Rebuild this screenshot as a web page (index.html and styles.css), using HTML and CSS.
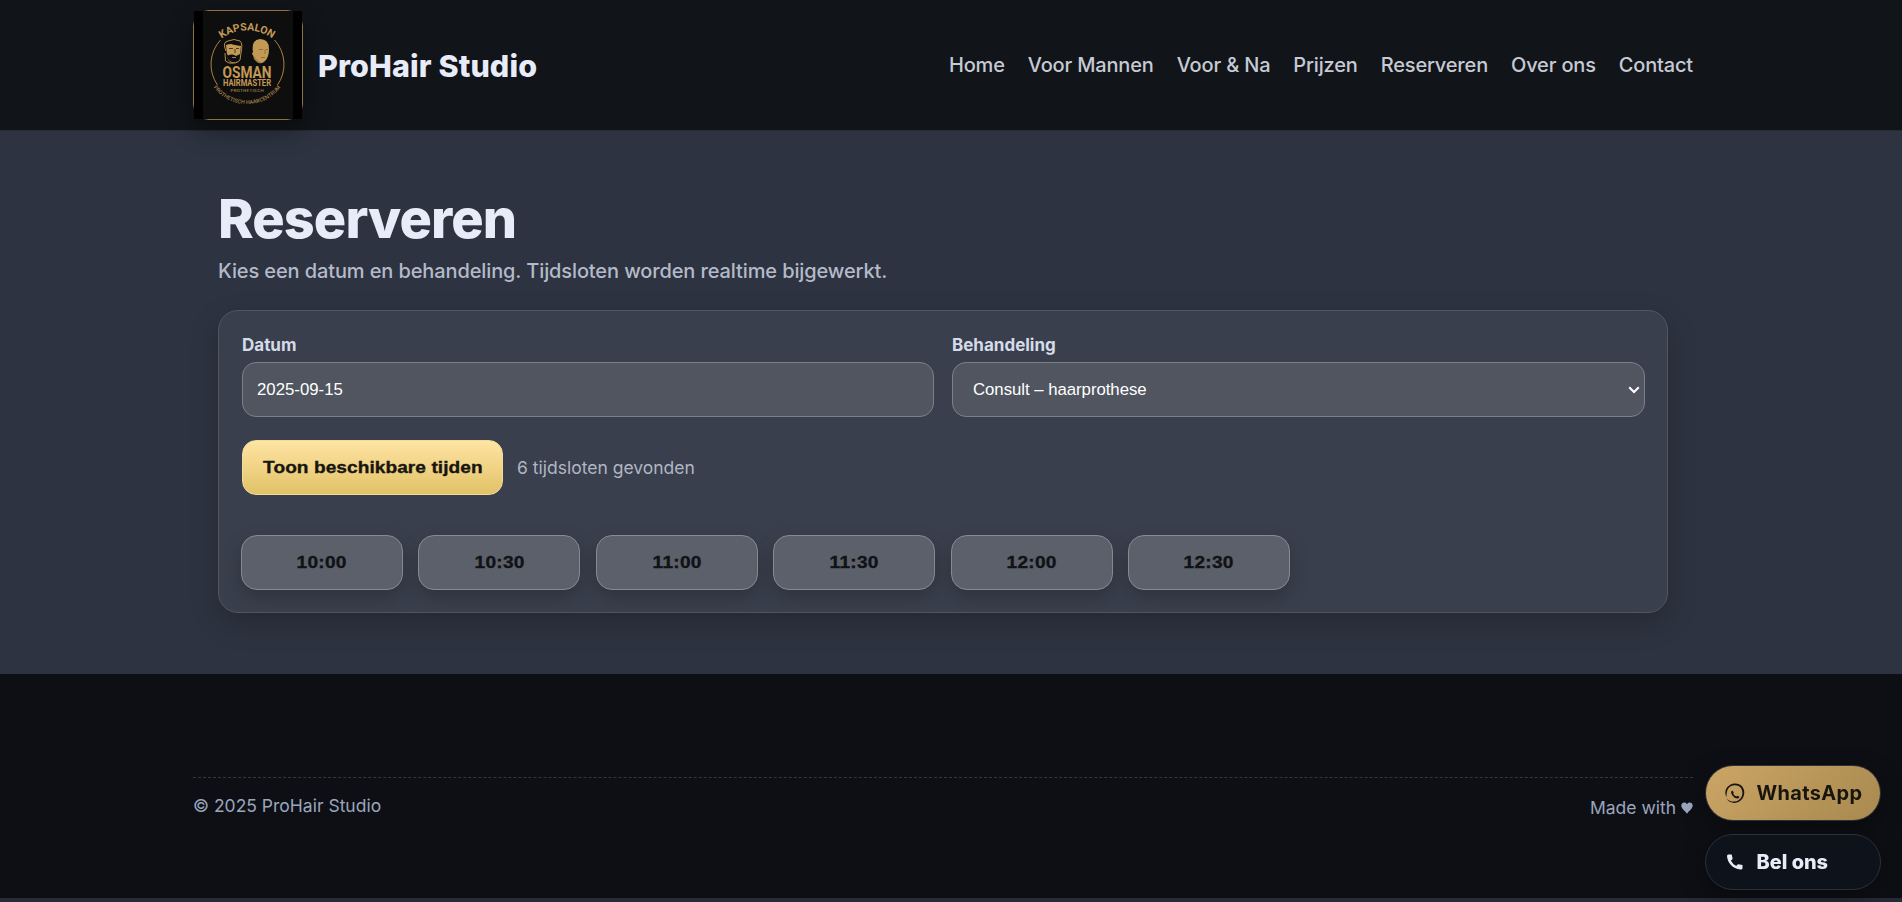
FILE: index.html
```html
<!DOCTYPE html>
<html lang="nl">
<head>
<meta charset="utf-8">
<title>ProHair Studio – Reserveren</title>
<link rel="stylesheet" href="styles.css">
</head>
<body>
<header class="site-header">
  <div class="container header-row">
    <a class="brand">
      <span class="logo">
        <svg viewBox="0 0 108 108" width="108" height="108" aria-label="Kapsalon Osman Hairmaster">
          <defs>
            <path id="arc-top" d="M23 31.500 A43 43 0 0 1 83 31.500"/>
            <path id="arc-bottom" d="M18.500 75 A42 42 0 0 0 87.500 75"/>
          </defs>
          <rect width="108" height="108" fill="#000"/>
          <rect x="9" width="90" height="108" fill="#0e0e0f"/>
          <g fill="none" stroke="#a78143" stroke-width="1">
            <path d="M26.500 29 A36 36 0 0 0 23.500 74"/>
            <path d="M80.500 29 A36 36 0 0 1 83.500 74"/>
          </g>
          <g fill="#c39a55" class="logo-text">
            <text font-size="10.500" text-anchor="middle"><textPath href="#arc-top" startOffset="50%">KAPSALON</textPath></text>
            <text x="53" y="67" font-size="16.500" text-anchor="middle" textLength="49" lengthAdjust="spacingAndGlyphs">OSMAN</text>
            <text x="53" y="75" font-size="8.200" text-anchor="middle" textLength="48" lengthAdjust="spacingAndGlyphs">HAIRMASTER</text>
            <text x="53" y="80.700" font-size="4.400" text-anchor="middle" textLength="33" class="logo-dim">PROTHETISCH</text>
            <text font-size="5.400" text-anchor="middle" class="logo-dim"><textPath href="#arc-bottom" startOffset="50%">PROTHETISCH HAARCENTRUM</textPath></text>
          </g>
          <path fill="#c39a55" d="M32 34 L33 44 Q34 52 39 52 Q46 51 46 44 L47 35 Q40 34 37 33 Q35 33 32 34Z"/>
          <path fill="#0e0e0f" d="M32 41 L34 44.500 Q38 42.500 42 45 L46 43 L46 48 Q43 52 38 51 Q33 50 32 41Z"/>
          <path fill="none" stroke="#c39a55" stroke-width=".9" d="M32 40 Q28 31 34 30 Q40 27 46 30 Q49 32 47 42 L46 49 Q43 53 35 52 L31.500 50 L31 42"/>
          <path fill="none" stroke="#0e0e0f" stroke-width=".7" d="M35 37.500h4M42 37.500h3M41 38v4"/>
          <path fill="none" stroke="#c39a55" stroke-width=".8" d="M38 46.500h4"/>
          <path fill="#c39a55" d="M59 41 Q57 29 66 28 Q75 28 75 38 Q75 46 71 50 Q67 54 63 51 Q59 48 59.500 45 Q57 43 59 41Z"/>
          <path fill="none" stroke="#6b5129" stroke-width=".6" d="M65 38.500h4M71.500 38.500h2.500M71 39v4M67 46.500h4M60 46Q63 51 67 52"/>
        </svg>
      </span>
      <span class="brand-name">ProHair Studio</span>
    </a>
    <nav class="nav">
      <a>Home</a><a>Voor Mannen</a><a>Voor &amp; Na</a><a>Prijzen</a><a>Reserveren</a><a>Over ons</a><a>Contact</a>
    </nav>
  </div>
</header>

<main class="booking">
  <h1>Reserveren</h1>
  <p class="lead">Kies een datum en behandeling. Tijdsloten worden realtime bijgewerkt.</p>
  <section class="card">
    <div class="fields">
      <label class="field"><span>Datum</span><input type="text" value="2025-09-15"></label>
      <label class="field"><span>Behandeling</span>
        <div class="select-wrap">
          <select><option>Consult – haarprothese</option></select>
          <svg class="chevron" viewBox="0 0 12 8" width="12" height="8"><path d="M1.200 1.200 6 6 10.800 1.200" fill="none" stroke="#fff" stroke-width="2"/></svg>
        </div>
      </label>
    </div>
    <div class="actions">
      <button class="btn-gold"><span>Toon beschikbare tijden</span></button>
      <span class="status">6 tijdsloten gevonden</span>
    </div>
    <div class="slots">
      <button><span>10:00</span></button><button><span>10:30</span></button><button><span>11:00</span></button><button><span>11:30</span></button><button><span>12:00</span></button><button><span>12:30</span></button>
    </div>
  </section>
</main>

<footer class="site-footer">
  <div class="container footer-row">
    <span>© 2025 ProHair Studio</span>
    <span class="made">Made with <svg class="heart" viewBox="0 0 12 12" width="12" height="12"><path fill="currentColor" d="M6 11.800C5 9.800.3 7 .3 3.600.3.200 4.700-.6 6 2.300 7.300-.6 11.700.2 11.700 3.600 11.700 7 7 9.800 6 11.800Z"/></svg></span>
  </div>
</footer>

<div class="floating">
  <a class="pill pill-gold">
    <svg viewBox="0 0 20 20" width="20" height="20"><path fill="currentColor" fill-rule="evenodd" d="M9.800.5C15.500.200 19.400 4.300 19.300 9.600 19.200 15.500 15 20 9.500 19.900 6 19.800 3 18.300 1.300 15.200 3.600 17.800 6.400 18.800 9.600 18.500 14.300 18.200 17.400 14.300 17.400 9.700 17.300 5 14.200 2.200 9.800 2.300 6.800 2.400 4.200 3.800 2.800 6.200 1.300 9 1.700 12.600 1.300 14 -.4 10.500.2 6.800 2.400 4.100 4.200 1.900 6.900.700 9.800.500Z"/><path fill="currentColor" d="M6.300 8.200Q7.500 7 8.200 8.600L8.700 9.800 8.200 10.700Q9.400 12.700 11.400 13.500L12.400 12.700 14.400 13.700Q14.300 15.300 12.500 15.400 9.200 15.300 7.200 12.200 5.500 9.500 6.300 8.200Z"/></svg>
    WhatsApp
  </a>
  <a class="pill pill-dark">
    <svg viewBox="0 0 20 20" width="20" height="20"><path fill="currentColor" d="M3.200 2.500H6.700L7.600 6.500Q7.500 8 5.800 8.500 7.500 12 11.300 14 12 12.300 13.300 12.200L17.500 13.100V16.600Q17 17.800 15.500 17.500 9.500 17 5.700 12.700 2.300 9 2 4 2 2.500 3.200 2.500Z"/></svg>
    Bel ons
  </a>
</div>
</body>
</html>
```
FILE: styles.css
```css
* { box-sizing: border-box; }
body {
  margin: 0;
  min-height: 902px;
  font-family: Inter, "Liberation Sans", sans-serif;
  font-size: 18px;
  color: #e8ecf8;
  background: #262b38;
  overflow: hidden;
}
.container { width: 1500px; margin-left: 193px; }

.site-header { height: 131px; background: #111418; border-bottom: 1px solid #262b30; }
.header-row { height: 130px; display: flex; align-items: center; justify-content: space-between; }
.brand { display: flex; align-items: center; gap: 15px; }
.logo {
  width: 110px; height: 110px;
  border: 1px solid #8c7346; border-radius: 16px;
  box-shadow: 0 10px 26px rgba(0, 0, 0, .4);
}
.logo svg { display: block; }
.logo-text { font-family: Roboto, sans-serif; font-weight: 700; }
.logo-dim { fill: #a17f48; font-weight: 500; }
.brand-name { font-size: 30.500px; font-weight: 800; letter-spacing: .1px; white-space: nowrap; }
.nav { display: flex; gap: 23px; font-size: 20px; font-weight: 500; letter-spacing: -.17px; color: #c6cad4; }
.nav a { white-space: nowrap; }

.booking { height: 543px; padding: 58px 234px 0 218px; background: #2d3340; }
h1 { margin: 0; font-size: 54px; line-height: 60px; font-weight: 800; letter-spacing: -.9px; }
.lead { margin: 6px 0 0; font-size: 20px; line-height: 32px; font-weight: 500; letter-spacing: -.115px; color: #b4bac9; }
.card {
  margin-top: 23px; height: 303px; padding: 21px 22px 21px 23px;
  background: #393f4c; border: 1px solid #505664; border-radius: 20px;
  box-shadow: 0 10px 30px rgba(0, 0, 0, .2);
}
.fields { display: grid; grid-template-columns: 692px 693px; gap: 18px; }
.field { display: flex; flex-direction: column; font-size: 17px; font-weight: 700; color: #d6dbe8; }
.field > span { line-height: 26px; margin-bottom: 4px; }
input, select {
  display: block; appearance: none;
  height: 55px; width: 100%; padding: 0 14px;
  font: 400 16.800px "Liberation Sans", sans-serif; color: #fff;
  background: #50555f; border: 1px solid #7b808a; border-radius: 14px;
}
select { padding: 0 0 0 20px; letter-spacing: -.04px; }
.select-wrap { position: relative; }
.chevron { position: absolute; right: 5px; top: 24px; }
.actions { display: flex; align-items: center; gap: 14px; margin-top: 23px; }
.btn-gold, .slots button {
  height: 55px; padding: 0;
  font: 700 17.200px "Liberation Sans", sans-serif;
}
.btn-gold span, .slots span { display: inline-block; transform: scaleX(1.11); }
.btn-gold {
  width: 261px; color: #18150e;
  -webkit-text-stroke: .35px #18150e;
  border: 1px solid #f3dc98; border-radius: 14px;
  background: linear-gradient(#ffe4a3, #e1c267);
}
.btn-gold span { letter-spacing: .06px; }
.status { font-size: 17.500px; color: #b0b6c4; }
.slots { display: grid; grid-template-columns: repeat(6, 162px); gap: 15.400px; margin: 40px 0 0 -1px; }
.slots button {
  color: #101215; -webkit-text-stroke: .35px #101215;
  background: #5b606b; border: 1px solid #858a93; border-radius: 16px;
  box-shadow: 0 8px 20px rgba(0, 0, 0, .2);
}
.slots span { letter-spacing: .25px; }

.site-footer { height: 224px; padding-top: 103px; background: #0d0f14; }
.footer-row {
  display: flex; justify-content: space-between; align-items: flex-start;
  border-top: 1px dashed #33363b; padding-top: 16px;
  font-size: 17.500px; line-height: 24px; color: #9aa6bd;
}
.made { padding-top: 2px; }

.floating { position: fixed; right: 21px; bottom: 12px; display: flex; flex-direction: column; gap: 13px; }
.pill {
  display: flex; align-items: center; gap: 11.500px;
  width: 176px; height: 56px; padding-left: 19px;
  border: 1px solid #2c303a; border-radius: 28px;
  font-size: 19.900px; font-weight: 800; white-space: nowrap;
  box-shadow: 0 8px 24px rgba(0, 0, 0, .35);
}
.pill-gold { color: #18150e; background: linear-gradient(135deg, #cba566, #a8894f); font-weight: 700; letter-spacing: .4px; }
.pill-dark { color: #e8ecf8; background: #0e121a; }
```
